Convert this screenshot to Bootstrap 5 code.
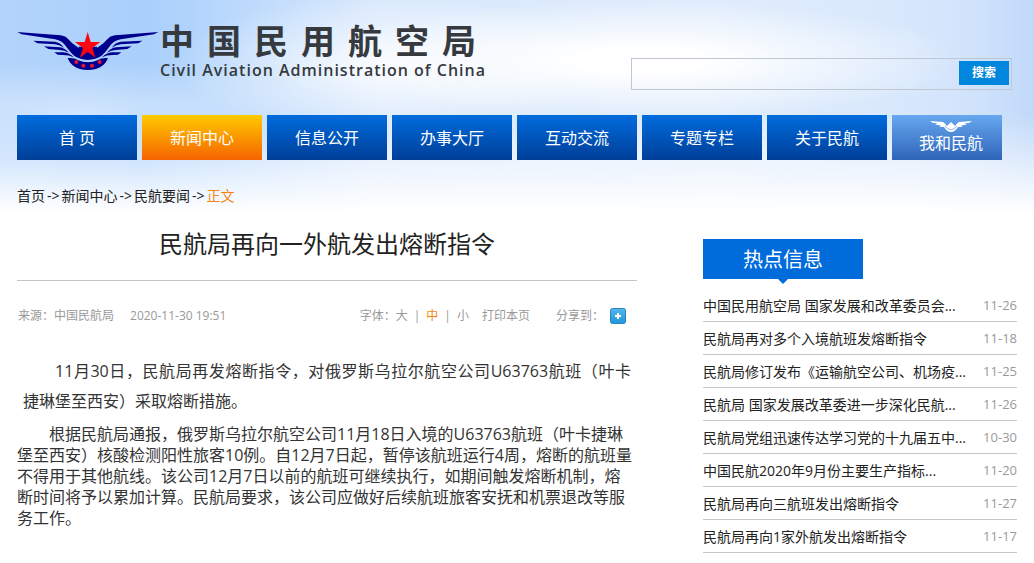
<!DOCTYPE html>
<html lang="zh-CN">
<head>
<meta charset="utf-8">
<meta name="viewport" content="width=device-width, initial-scale=1">
<title>民航局再向一外航发出熔断指令 - 中国民用航空局</title>
<link href="https://cdn.jsdelivr.net/npm/bootstrap@5.3.0/dist/css/bootstrap.min.css" rel="stylesheet">
<style>
  body { font-family: "Open Sans", "Noto Sans CJK SC", sans-serif; font-size: 14px; line-height: 20px; color: #222; background: #fff; }
  a { color: inherit; text-decoration: none; }
  .sky {
    background:
      linear-gradient(to bottom, transparent 0, transparent 115px, rgba(255,255,255,.5) 165px, #fff 213px),
      radial-gradient(ellipse 260px 50px at 8% 112px, rgba(255,255,255,.45), transparent),
      radial-gradient(ellipse 320px 60px at 62% 60px, #fff 20%, transparent),
      radial-gradient(ellipse 220px 70px at 38% 65px, rgba(255,255,255,.85), transparent),
      linear-gradient(to right, #b3d4fb 0, #a9cffb 14%, #bddafc 24%, #d8e8fc 36%, #dfecfc 70%, #d8e8fc 88%, #d0e2fb 95%, #c0d9fa 100%);
    background-size: 100% 213px;
    background-repeat: no-repeat;
  }
  .wrap { max-width: 1000px; }
  .masthead { height: 115px; }
  .logo-mark { width: 142px; height: 41px; margin-top: 30px; flex: none; }
  .brand { color: #363a3e; padding: 22px 0 0 1px; }
  .brand-zh { font-size: 34px; line-height: 38px; font-weight: 700; gap: 13px; }
  .brand-en { font-size: 16px; line-height: 20px; font-weight: 600; letter-spacing: 1px; white-space: nowrap; }
  .search { width: 381px; height: 32px; border: 1px solid #bfc7d2; margin: 58px 5px 0 0; padding: 2px; }
  .search input { background: transparent; border: 0; outline: 0; min-width: 0; }
  .search button { width: 50px; height: 24px; border: 0; background: #0086dc; color: #fff; font-size: 12px; font-weight: 700; line-height: 24px; padding: 0; }
  .mainnav { gap: 5px; }
  .mainnav a { flex: 0 1 120px; height: 45px; line-height: 47px; font-size: 16px; color: #fff; text-align: center; white-space: nowrap; background: linear-gradient(#006cdd, #003e98); }
  .mainnav a.current { background: linear-gradient(#ffca00, #f56300); }
  .mainnav a.mine { flex-basis: 110px; background: linear-gradient(#66a8ef, #2f65b8); padding: 5px 0 0 8px; line-height: 20px; }
  .mine svg { display: block; width: 42px; height: 13px; margin: 0 auto; }
  .crumbs { padding-top: 26px; gap: 2px; }
  .orange { color: #f7850d; }
  .article { flex: 0 1 620px; }
  .article h1 { font-size: 24px; line-height: 36px; font-weight: 400; padding: 20px 0 18px; border-bottom: 1px solid #c4c4c4; text-align: center; }
  .meta { font-size: 12px; color: #999; padding: 25px 11px 0 1px; }
  .meta button { border: 0; background: none; padding: 0; color: inherit; }
  .meta button.orange { color: #f7850d; }
  .sizes { gap: 6px; margin-right: 13px; }
  .share { margin: 0 6px 0 26px; }
  .meta svg { width: 16px; height: 16px; display: block; }
  .body-text { font-size: 16px; color: #333; }
  .lead-par { line-height: 30px; text-indent: 32px; text-align: justify; padding: 0 6px; margin: 30px 0 8px; }
  .lead-par span { text-indent: 0; }
  .next-par { line-height: 21px; text-indent: 32px; margin: 0; padding-right: 3px; }
  .hot { flex: 0 1 314px; min-width: 0; padding-top: 33px; }
  .hot h2 { width: 160px; height: 40px; line-height: 42px; font-size: 20px; font-weight: 400; color: #fff; background: #006cdb; text-align: center; margin: 0 0 10px; }
  .hot h2::after { content: ""; position: absolute; left: 50%; top: 100%; margin-left: -5px; border: 5px solid transparent; border-top-color: #006cdb; border-bottom: 0; }
  .hot li { height: 33px; line-height: 33px; border-bottom: 1px solid #c6c6c6; }
  .hot time { font-size: 13px; color: #999; }
</style>
</head>
<body>
<div class="sky">
  <div class="wrap mx-auto">
    <header class="masthead d-flex">
      <a href="#" class="d-flex" aria-label="中国民用航空局">
        <svg class="logo-mark" viewBox="50 90 426 123" aria-hidden="true">
          <g id="wings">
            <g id="wing" fill="#00008f">
              <path d="M51 96 L160 104 Q184 104 196 110 Q206 119 215 129 L263 164 V180 Q238 179 222 168 Q210 158 199 142 Q186 121 164 118 L64 103 Z"/>
              <path d="M99 122 L164 125 Q180 127 191 143 Q180 135 164 133 L111 130 Z"/>
              <path d="M131 139 L178 142 Q194 144 205 158 Q194 151 178 150 L144 147 Z"/>
              <path d="M162 157 L190 157 Q207 159 220 172 Q206 165 189 165 L172 164 Z"/>
              <path d="M202 174 Q222 172 234 181 Q247 187 263 187 V210 Q216 210 202 174 Z"/>
            </g>
            <use href="#wing" transform="translate(525 0) scale(-1 1)"/>
          </g>
          <path fill="#00008f" d="M235 140 H290 V160 L263 176 L235 160 Z"/>
          <path fill="#fb0512" d="M262 96 L271 126 H300 L276 144 L285 173 L262 155 L239 173 L248 144 L224 126 H253 Z"/>
          <g fill="#ed1035"><circle cx="228" cy="186" r="6"/><circle cx="249" cy="197" r="6"/><circle cx="275" cy="197" r="6"/><circle cx="298" cy="186" r="6"/></g>
        </svg>
        <div class="brand">
          <div class="brand-zh d-flex"><span>中</span><span>国</span><span>民</span><span>用</span><span>航</span><span>空</span><span>局</span></div>
          <div class="brand-en">Civil Aviation Administration of China</div>
        </div>
      </a>
      <form class="search d-flex ms-auto">
        <input type="text" class="flex-grow-1" aria-label="搜索内容">
        <button type="submit">搜索</button>
      </form>
    </header>
    <nav class="mainnav d-flex">
      <a href="#">首 页</a>
      <a href="#" class="current">新闻中心</a>
      <a href="#">信息公开</a>
      <a href="#">办事大厅</a>
      <a href="#">互动交流</a>
      <a href="#">专题专栏</a>
      <a href="#">关于民航</a>
      <a href="#" class="mine">
        <svg viewBox="0 0 42 13" aria-hidden="true"><path fill="#fff" d="M0 1 L13 2 Q15 3 17 6 Q19 4 19 4 L21 2 L23 4 L25 6 Q27 3 29 2 L42 1 L39 3 L34 3 L37 4 L35 5 L31 5 L33 6 L31 7 L28 7 Q25 12 21 12 Q17 12 14 7 L11 7 L9 6 L11 5 L7 5 L5 4 L8 3 L3 3 Z"/><path fill="none" stroke="#5995df" stroke-width=".7" d="M15 6 Q21 13.500 27 6"/></svg>我和民航</a>
    </nav>
    <div class="crumbs d-flex"><a href="#">首页</a><span>-&gt;</span><a href="#">新闻中心</a><span>-&gt;</span><a href="#">民航要闻</a><span>-&gt;</span><span class="orange">正文</span></div>
    <div class="d-flex justify-content-between">
      <main class="article">
        <h1 class="m-0">民航局再向一外航发出熔断指令</h1>
        <div class="meta d-flex align-items-center">
          <span>来源：中国民航局</span>
          <time class="ms-3">2020-11-30 19:51</time>
          <div class="sizes d-flex ms-auto"><span>字体：<button type="button">大</button></span><span>|</span><button type="button" class="orange">中</button><span>|</span><button type="button">小</button></div>
          <button type="button">打印本页</button>
          <span class="share">分享到：</span>
          <button type="button" aria-label="更多分享">
            <svg viewBox="0 0 16 16"><defs><linearGradient id="plus" x2="0" y2="1"><stop stop-color="#57b6ec"/><stop offset="1" stop-color="#1d96dc"/></linearGradient></defs><rect x=".5" y=".5" width="15" height="15" rx="2" fill="url(#plus)" stroke="#2c85bd"/><path d="M8 5v6M5 8h6" stroke="#fff" stroke-width="2"/></svg>
          </button>
        </div>
        <div class="body-text">
          <p class="lead-par">11月30日，民航局再发熔断指令，对俄罗斯乌拉尔航空公司U63763航班（叶卡<span class="d-inline-block">捷琳堡</span>至西安）采取熔断措施。</p>
          <p class="next-par">根据民航局通报，俄罗斯乌拉尔航空公司11月18日入境的U63763航班（叶卡捷琳堡至西安）核酸检测阳性旅客10例。自12月7日起，暂停该航班运行4周，熔断的航班量不得用于其他航线。该公司12月7日以前的航班可继续执行，如期间触发熔断机制，熔断时间将予以累加计算。民航局要求，该公司应做好后续航班旅客安抚和机票退改等服务工作。</p>
        </div>
      </main>
      <aside class="hot">
        <h2 class="position-relative">热点信息</h2>
        <ul class="list-unstyled m-0">
          <li class="d-flex justify-content-between"><a href="#" class="text-truncate">中国民用航空局 国家发展和改革委员会...</a><time>11-26</time></li>
          <li class="d-flex justify-content-between"><a href="#" class="text-truncate">民航局再对多个入境航班发熔断指令</a><time>11-18</time></li>
          <li class="d-flex justify-content-between"><a href="#" class="text-truncate">民航局修订发布《运输航空公司、机场疫...</a><time>11-25</time></li>
          <li class="d-flex justify-content-between"><a href="#" class="text-truncate">民航局 国家发展改革委进一步深化民航...</a><time>11-26</time></li>
          <li class="d-flex justify-content-between"><a href="#" class="text-truncate">民航局党组迅速传达学习党的十九届五中...</a><time>10-30</time></li>
          <li class="d-flex justify-content-between"><a href="#" class="text-truncate">中国民航2020年9月份主要生产指标...</a><time>11-20</time></li>
          <li class="d-flex justify-content-between"><a href="#" class="text-truncate">民航局再向三航班发出熔断指令</a><time>11-27</time></li>
          <li class="d-flex justify-content-between"><a href="#" class="text-truncate">民航局再向1家外航发出熔断指令</a><time>11-17</time></li>
        </ul>
      </aside>
    </div>
  </div>
</div>
<script src="https://cdn.jsdelivr.net/npm/bootstrap@5.3.0/dist/js/bootstrap.bundle.min.js"></script>
</body>
</html>
